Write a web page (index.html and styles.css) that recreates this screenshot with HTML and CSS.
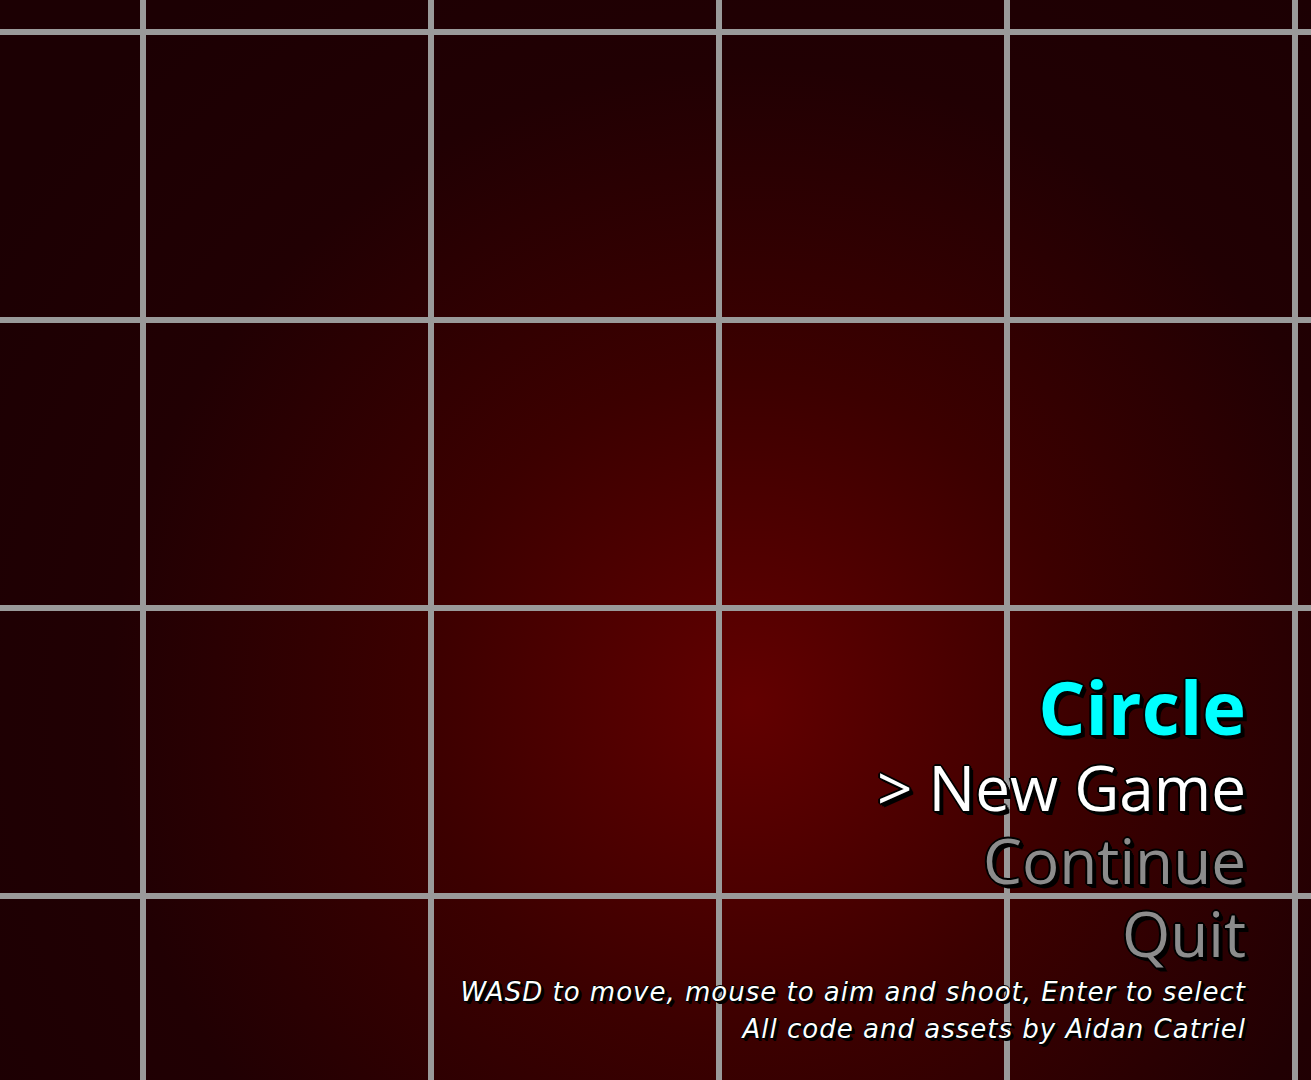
FILE: index.html
```html
<!DOCTYPE html>
<html>
<head>
<meta charset="utf-8">
<title>Circle</title>
<link rel="stylesheet" href="styles.css">
</head>
<body>
<main class="screen">
  <nav class="menu">
    <h1 class="title">Circle</h1>
    <div class="item item-active">&gt; New Game</div>
    <div class="item item-disabled">Continue</div>
    <div class="item item-disabled">Quit</div>
    <p class="help help-first">WASD to move, mouse to aim and shoot, Enter to select</p>
    <p class="help">All code and assets by Aidan Catriel</p>
  </nav>
</main>
</body>
</html>
```
FILE: styles.css
```css
html, body {
  margin: 0;
  padding: 0;
  width: 100%;
  height: 100%;
  overflow: hidden;
}
body {
  background-color: #1c0003;
}
.screen {
  width: 1311px;
  height: 1080px;
  box-sizing: border-box;
  display: flex;
  flex-direction: column;
  justify-content: flex-end;
  align-items: flex-end;
  padding: 0 65px 32px 0;
  background-image:
    linear-gradient(to right, #9a9a9a 0, #9a9a9a 6px, transparent 6px),
    linear-gradient(to bottom, #9a9a9a 0, #9a9a9a 6px, transparent 6px),
    radial-gradient(circle at 750px 705px, #620000 0, #3c0000 330px, #210003 640px, #1c0003 900px);
  background-size: 288px 288px, 288px 288px, 100% 100%;
  background-position: 140px 0, 0 29px, 0 0;
  background-repeat: repeat, repeat, no-repeat;
  font-family: "Open Sans", "DejaVu Sans", sans-serif;
}
.menu {
  display: flex;
  flex-direction: column;
  align-items: flex-end;
  text-align: right;
}
.title, .item, .help {
  margin: 0;
  white-space: nowrap;
  text-shadow:
    -2px 0 0 #000, 2px 0 0 #000, 0 -2px 0 #000, 0 2px 0 #000,
    -1px -1px 0 #000, 1px -1px 0 #000, -1px 1px 0 #000, 1px 1px 0 #000,
    3px 3px 0 #000, 2px 3px 0 #000, 3px 2px 0 #000, 4px 4px 0 #000;
}
.title {
  font-size: 74px;
  font-weight: 700;
  line-height: 88px;
  color: #00ffff;
}
.item {
  font-size: 62px;
  font-weight: 400;
  line-height: 73px;
}
.item-active {
  color: #ffffff;
}
.item-disabled {
  color: #8c8c8c;
}
.help {
  font-family: "DejaVu Sans", "Open Sans", sans-serif;
  font-size: 26px;
  font-style: italic;
  letter-spacing: 1px;
  line-height: 37px;
  color: #ffffff;
  text-shadow:
    -1px 0 0 #000, 1px 0 0 #000, 0 -1px 0 #000, 0 1px 0 #000,
    2px 2px 0 #000, 3px 3px 0 #000;
}
.help-first {
  margin-top: 4px;
}
```
